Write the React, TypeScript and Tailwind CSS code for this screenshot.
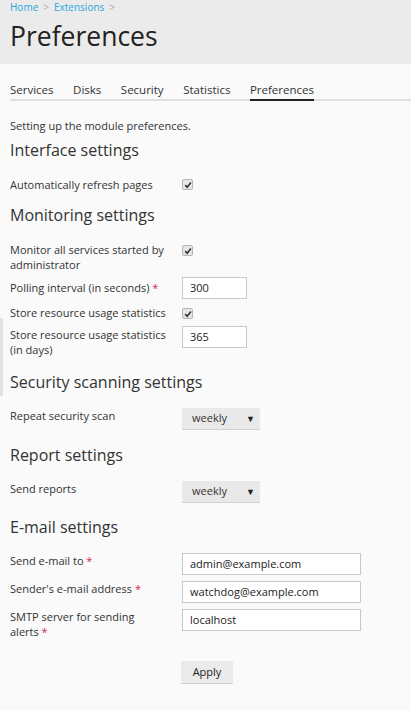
import React from "react";

const Req = () => <span className="text-[#d6263a]">{"\u00a0*"}</span>;

const Check = ({ className = "" }: { className?: string }) => (
  <span className={`flex h-[11px] w-[11px] items-center justify-center rounded-[2px] border border-[#b5b5b5] bg-[#e6e6e6] ${className}`}>
    <svg viewBox="0 0 10 10" className="h-[8px] w-[8px]">
      <path d="M1.5 5.2 L4 7.8 L8.6 2" fill="none" stroke="#333" strokeWidth="2" />
    </svg>
  </span>
);

const Row = ({
  label,
  children,
  className = "",
  labelClass = "",
}: {
  label: React.ReactNode;
  children: React.ReactNode;
  className?: string;
  labelClass?: string;
}) => (
  <div className={`flex items-start ${className}`}>
    <div className={`w-[172px] shrink-0 pr-[12px] text-[11px] leading-[15px] text-[#333] ${labelClass}`}>{label}</div>
    <div className="flex flex-1 items-start">{children}</div>
  </div>
);

const TextInput = ({ value, wide }: { value: string; wide?: boolean }) => (
  <div
    className={`${wide ? "w-[179px]" : "w-[65px]"} h-[22px] border border-[#c8c8c8] bg-white px-[7px] text-[11px] leading-[20px] text-[#222]`}
  >
    {value}
  </div>
);

const Select = () => (
  <div className="flex h-[21px] w-[78px] items-center justify-between bg-[#e9e9e9] pl-[10px] pr-[5px] text-[11px] text-[#333] shadow-[0_1px_0_#d0d0d0]">
    <span>weekly</span>
    <span className="text-[9px] text-[#222]">▼</span>
  </div>
);

const Heading = ({ children, className = "" }: { children: React.ReactNode; className?: string }) => (
  <h2 className={`text-[16px] leading-[22px] font-normal text-[#333] ${className}`}>{children}</h2>
);

export default function App() {
  const tabs = ["Services", "Disks", "Security", "Statistics", "Preferences"];
  return (
    <div className="relative min-h-[711px] bg-[#fafafa] font-['Open_Sans',sans-serif]">
      {/* header */}
      <div className="h-[64px] bg-[#ebebeb] px-[10px] pt-[1px]">
        <div className="flex items-center gap-[5px] text-[10px] leading-[13px] text-[#2aa6dd]">
          <span>Home</span>
          <span className="text-[#aaa]">&gt;</span>
          <span>Extensions</span>
          <span className="text-[#aaa]">&gt;</span>
        </div>
        <h1 className="mt-[6px] text-[26.5px] leading-[32px] font-normal text-[#222]">Preferences</h1>
      </div>

      {/* tabs */}
      <div className="ml-[10px] mt-[18px] flex border-b-2 border-[#e0e0e0] text-[11.5px] text-[#333]">
        {tabs.map((t) => (
          <div
            key={t}
            className={`-mb-[2px] mr-[19.5px] pb-[2px] leading-[15px] ${t === "Preferences" ? "border-b-2 border-[#222]" : "border-b-2 border-transparent"}`}
          >
            {t}
          </div>
        ))}
      </div>

      <div className="px-[10px]">
        <p className="mt-[18px] text-[11px] leading-[14px] text-[#333]">Setting up the module preferences.</p>

        <Heading className="mt-[6px]">Interface settings</Heading>
        <Row label="Automatically refresh pages" className="mt-[16px]">
          <Check className="mt-[2px]" />
        </Row>

        <Heading className="mt-[12px]">Monitoring settings</Heading>
        <Row label="Monitor all services started by administrator" className="mt-[16px]">
          <Check className="mt-[3px]" />
        </Row>
        <Row label={<>Polling interval (in seconds)<Req /></>} className="mt-[5px]" labelClass="pt-[3px]">
          <TextInput value="300" />
        </Row>
        <Row label="Store resource usage statistics" className="mt-[6px]">
          <Check className="mt-[3px]" />
        </Row>
        <Row label="Store resource usage statistics (in days)" className="mt-[6px]" labelClass="pt-[1px]">
          <TextInput value="365" />
        </Row>

        <Heading className="mt-[14px]">Security scanning settings</Heading>
        <Row label="Repeat security scan" className="mt-[15px]">
          <Select />
        </Row>

        <Heading className="mt-[15px]">Report settings</Heading>
        <Row label="Send reports" className="mt-[15px]">
          <Select />
        </Row>

        <Heading className="mt-[14px]">E-mail settings</Heading>
        <Row label={<>Send e-mail to<Req /></>} className="mt-[15px]">
          <TextInput value="admin@example.com" wide />
        </Row>
        <Row label={<>Sender's e-mail address<Req /></>} className="mt-[6px]">
          <TextInput value="watchdog@example.com" wide />
        </Row>
        <Row label={<>SMTP server for sending alerts<Req /></>} className="mt-[6px]">
          <TextInput value="localhost" wide />
        </Row>

        <div className="mt-[19px] pl-[171px] pb-[28px]">
          <button className="h-[22px] w-[52px] bg-[#ebebeb] text-[11px] text-[#222] shadow-[0_1px_0_#d0d0d0]">Apply</button>
        </div>
      </div>

      {/* scroll edge */}
      <div className="absolute left-0 top-[318px] h-[78px] w-[3px] bg-[#e3e3e3]" />
    </div>
  );
}
